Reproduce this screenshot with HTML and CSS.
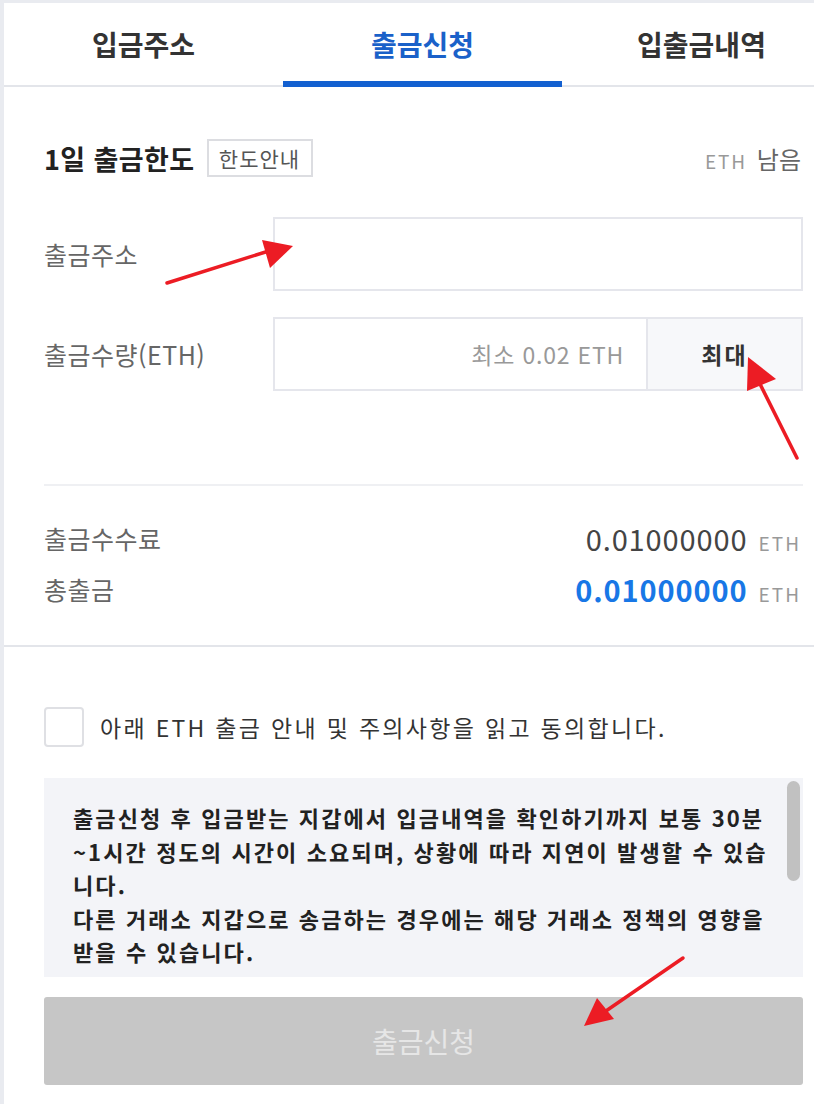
FILE: index.html
```html
<!DOCTYPE html>
<html lang="ko">
<head>
<meta charset="utf-8">
<title>출금신청</title>
<link rel="stylesheet" href="styles.css">
</head>
<body>
<div class="frame">
  <nav class="tabs">
    <div class="tab">입금주소</div>
    <div class="tab active">출금신청</div>
    <div class="tab">입출금내역</div>
  </nav>

  <section class="form">
    <div class="limit-row">
      <div class="limit-left">
        <span class="limit-title">1일 출금한도</span>
        <span class="limit-btn">한도안내</span>
      </div>
      <div class="limit-right"><span class="unit">ETH</span> <span class="remain">남음</span></div>
    </div>

    <div class="field-row">
      <label class="field-label">출금주소</label>
      <div class="input-box"></div>
    </div>

    <div class="field-row">
      <label class="field-label">출금수량(ETH)</label>
      <div class="input-box split">
        <span class="placeholder">최소 0.02 ETH</span>
        <span class="max-btn">최대</span>
      </div>
    </div>

    <div class="divider"></div>

    <div class="sum-row">
      <span class="sum-label">출금수수료</span>
      <span class="sum-value"><span class="num">0.01000000</span><span class="eth">ETH</span></span>
    </div>
    <div class="sum-row">
      <span class="sum-label">총출금</span>
      <span class="sum-value"><span class="num blue">0.01000000</span><span class="eth">ETH</span></span>
    </div>
  </section>

  <section class="agree">
    <div class="check-row">
      <span class="checkbox"></span>
      <span class="check-text">아래 ETH 출금 안내 및 주의사항을 읽고 동의합니다.</span>
    </div>

    <div class="notice">
      <p class="notice-text">출금신청 후 입금받는 지갑에서 입금내역을 확인하기까지 보통 30분<br>~1시간 정도의 시간이 소요되며, 상황에 따라 지연이 발생할 수 있습<br>니다.<br>다른 거래소 지갑으로 송금하는 경우에는 해당 거래소 정책의 영향을<br>받을 수 있습니다.</p>
      <div class="scrollbar"></div>
    </div>

    <div class="submit">출금신청</div>
  </section>
</div>

<svg class="arrows" width="814" height="1104" viewBox="0 0 814 1104">
  <line x1="167" y1="283" x2="272" y2="250" stroke="#ec1c24" stroke-width="3.5" stroke-linecap="round"/>
  <polygon points="293,246 262,240 270,268" fill="#ec1c24"/>
  <line x1="797" y1="458" x2="757" y2="378" stroke="#ec1c24" stroke-width="3.5" stroke-linecap="round"/>
  <polygon points="748,357 776,379 747,391" fill="#ec1c24"/>
  <line x1="683" y1="958" x2="603" y2="1013" stroke="#ec1c24" stroke-width="3.5" stroke-linecap="round"/>
  <polygon points="584,1026 597,998 614,1019" fill="#ec1c24"/>
</svg>
</body>
</html>
```

FILE: styles.css
```css
* { box-sizing: border-box; }

html, body {
  margin: 0;
  padding: 0;
  background: #ffffff;
  overflow: hidden;
}

body {
  width: 814px;
  height: 1104px;
  position: relative;
  font-family: "Noto Sans CJK KR", "Noto Sans", sans-serif;
  color: #333;
}

.frame {
  width: 841px;
  border-left: 4px solid #e9ebf0;
  border-top: 3px solid #e9ebf0;
  min-height: 1104px;
}

/* Tabs */
.tabs {
  display: flex;
  height: 84px;
  border-bottom: 2px solid #e3e5ea;
}

.tab {
  flex: 1;
  display: flex;
  align-items: center;
  justify-content: center;
  font-size: 28px;
  font-weight: 700;
  color: #333;
  position: relative;
}

.tab.active {
  color: #1a61c9;
}

.tab.active::after {
  content: "";
  position: absolute;
  left: 0;
  right: 0;
  bottom: -2px;
  height: 6px;
  background: #1360d0;
}

/* Form */
.form {
  padding: 52px 38px 31px 40px;
  border-bottom: 2px solid #e3e5ea;
}

.limit-row {
  display: flex;
  align-items: center;
  justify-content: space-between;
  height: 38px;
}

.limit-left {
  display: flex;
  align-items: center;
  gap: 12px;
}

.limit-title {
  font-size: 27px;
  font-weight: 700;
  color: #222;
  letter-spacing: 0.4px;
}

.limit-btn {
  display: flex;
  align-items: center;
  justify-content: center;
  width: 106px;
  height: 38px;
  border: 2px solid #dcdde1;
  font-size: 21px;
  letter-spacing: 1px;
  color: #555;
}

.limit-right {
  display: flex;
  align-items: baseline;
  gap: 10px;
  padding-right: 2px;
}

.limit-right .unit {
  font-size: 19px;
  letter-spacing: 1.8px;
  color: #999;
}

.limit-right .remain {
  font-size: 24px;
  color: #666;
}

.field-row {
  display: flex;
  align-items: center;
  margin-top: 40px;
}

.field-row + .field-row {
  margin-top: 26px;
}

.field-label {
  width: 229px;
  font-size: 25px;
  letter-spacing: 0.5px;
  color: #666;
}

.input-box {
  flex: 1;
  height: 74px;
  border: 2px solid #e5e6ec;
  background: #fff;
}

.input-box.split {
  display: flex;
  align-items: stretch;
}

.placeholder {
  flex: 1;
  display: flex;
  align-items: center;
  justify-content: flex-end;
  padding-right: 22px;
  font-size: 23px;
  letter-spacing: 0.8px;
  color: #999;
}

.max-btn {
  width: 155px;
  display: flex;
  align-items: center;
  justify-content: center;
  background: #f7f8fa;
  border-left: 2px solid #e5e6ec;
  font-size: 23px;
  font-weight: 700;
  letter-spacing: 2px;
  color: #333;
}

.divider {
  height: 2px;
  background: #eff0f3;
  margin-top: 93px;
  margin-bottom: 26px;
}

.sum-row {
  display: flex;
  justify-content: space-between;
  align-items: center;
  height: 51px;
}

.sum-label {
  font-size: 25px;
  letter-spacing: 0.5px;
  color: #666;
}

.sum-value {
  display: flex;
  align-items: baseline;
  gap: 11px;
  padding-right: 2px;
}

.num {
  font-size: 29px;
  color: #444;
  letter-spacing: 0.9px;
}

.num.blue {
  color: #1877e6;
  font-weight: 700;
}

.eth {
  font-size: 19px;
  color: #999;
  letter-spacing: 2px;
}

/* Agreement */
.agree {
  padding: 60px 38px 0 40px;
}

.check-row {
  display: flex;
  align-items: center;
  gap: 16px;
}

.checkbox {
  width: 40px;
  height: 40px;
  border: 2px solid #dfe0e4;
  border-radius: 4px;
  background: #fff;
}

.check-text {
  font-size: 23px;
  color: #333;
  letter-spacing: 2.3px;
}

.notice {
  position: relative;
  margin-top: 31px;
  height: 199px;
  background: #f3f4f8;
  padding: 23px 30px 0 29px;
  overflow: hidden;
}

.notice-text {
  margin: 0;
  font-size: 22px;
  font-weight: 700;
  line-height: 33.5px;
  color: #222;
  letter-spacing: 2.1px;
  white-space: nowrap;
}

.scrollbar {
  position: absolute;
  top: 3px;
  right: 3px;
  width: 13px;
  height: 100px;
  border-radius: 7px;
  background: #c1c1c1;
}

.submit {
  margin-top: 20px;
  height: 88px;
  display: flex;
  align-items: center;
  justify-content: center;
  background: #c6c6c6;
  border-radius: 3px;
  font-size: 28px;
  color: #e6e6e6;
}

.arrows {
  position: absolute;
  left: 0;
  top: 0;
  pointer-events: none;
}
```
